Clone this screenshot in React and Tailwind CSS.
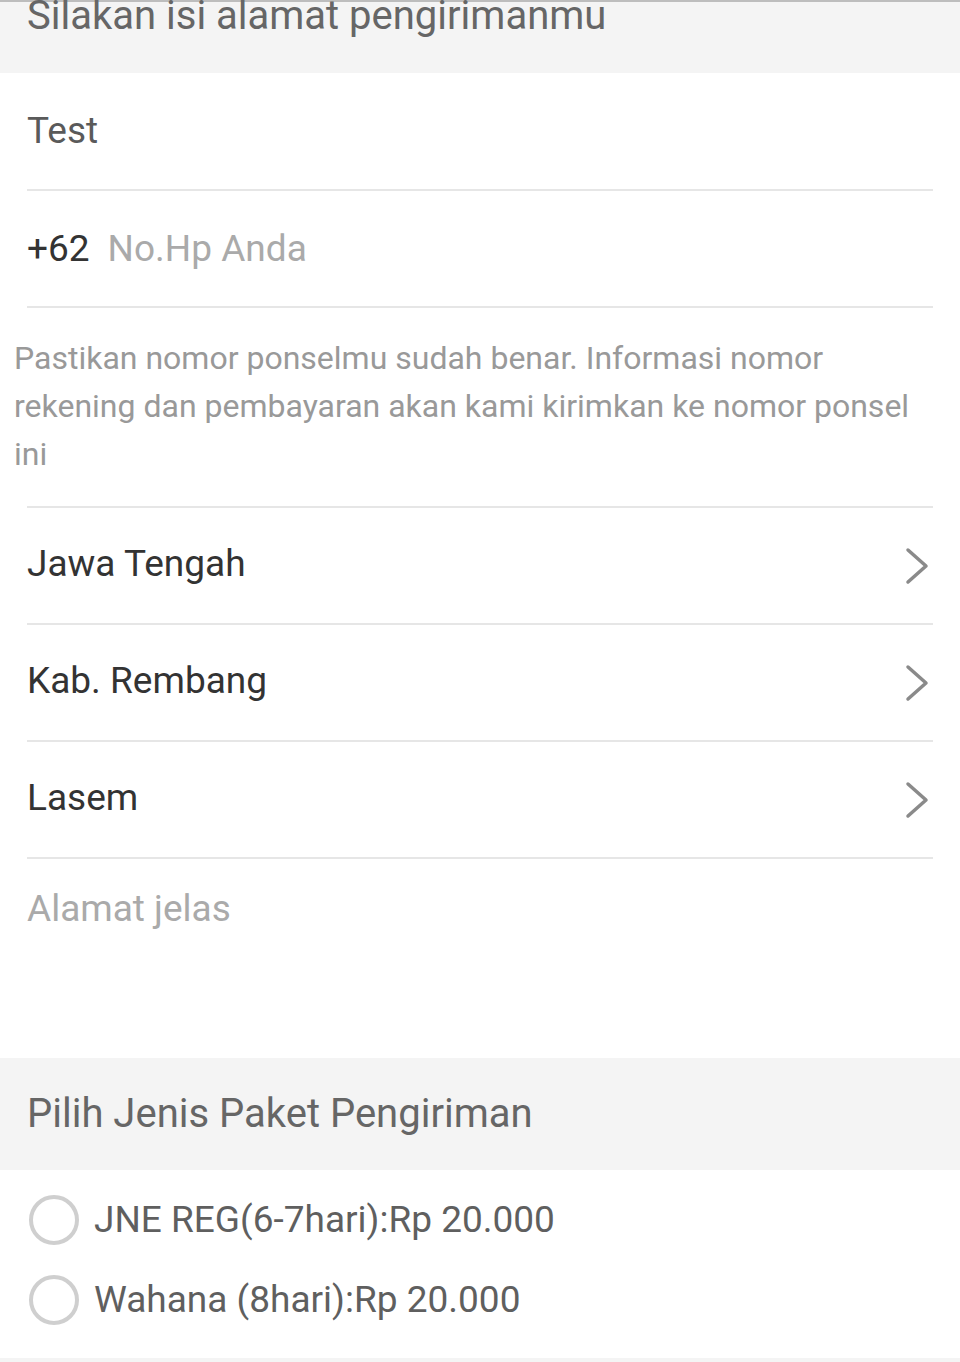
const font = { fontFamily: 'Roboto, "Noto Sans", sans-serif' }

function Chevron() {
  return (
    <svg width="26" height="40" viewBox="0 0 26 40" fill="none">
      <path d="M4 4 L22 20 L4 36" stroke="#8a8a8a" strokeWidth="3.5" strokeLinecap="round" strokeLinejoin="round" />
    </svg>
  )
}

function SelectRow({ label }) {
  return (
    <div className="mx-[27px] h-[117px] flex items-center justify-between border-b-2 border-[#e6e6e6]">
      <span className="text-[37px] text-[#333] -mt-[4px]">{label}</span>
      <span className="mr-[3px]"><Chevron /></span>
    </div>
  )
}

function Radio({ label }) {
  return (
    <div className="h-[80px] flex items-center">
      <span className="ml-[29px] w-[50px] h-[50px] rounded-full border-[4px] border-[#cfcfcf] shrink-0" />
      <span className="ml-[15px] text-[37px] text-[#5f5f5f]">{label}</span>
    </div>
  )
}

export default function App() {
  return (
    <div className="w-[960px] h-[1362px] bg-white overflow-hidden" style={font}>
      <div className="h-[73px] bg-[#f4f4f4] border-t-2 border-[#bdbdbd] px-[27px]">
        <p className="text-[40px] leading-[40px] text-[#666] -mt-[6px]">Silakan isi alamat pengirimanmu</p>
      </div>

      <div className="mx-[27px] h-[118px] flex items-center border-b-2 border-[#e6e6e6]">
        <span className="text-[37px] text-[#5a5a5a]">Test</span>
      </div>

      <div className="mx-[27px] h-[117px] flex items-center border-b-2 border-[#e6e6e6]">
        <span className="text-[37px] text-[#333]">+62</span>
        <span className="ml-[18px] text-[37px] text-[#aaa]">No.Hp Anda</span>
      </div>

      <div className="px-[14px] pt-[26px] pb-[28px]">
        <p className="text-[32px] leading-[48px] text-[#999] whitespace-nowrap">
          Pastikan nomor ponselmu sudah benar. Informasi nomor
          <br />
          rekening dan pembayaran akan kami kirimkan ke nomor ponsel
          <br />
          ini
        </p>
      </div>

      <div className="mx-[27px] border-t-2 border-[#e6e6e6]" />
      <SelectRow label="Jawa Tengah" />
      <SelectRow label="Kab. Rembang" />
      <SelectRow label="Lasem" />

      <div className="h-[199px] px-[27px] pt-[22px]">
        <span className="text-[37px] text-[#aaa]">Alamat jelas</span>
      </div>

      <div className="h-[112px] bg-[#f4f4f4] px-[27px] flex items-center">
        <span className="text-[40px] text-[#666]">Pilih Jenis Paket Pengiriman</span>
      </div>

      <div className="pt-[10px] h-[188px]">
        <Radio label="JNE REG(6-7hari):Rp 20.000" />
        <Radio label="Wahana (8hari):Rp 20.000" />
      </div>
      <div className="h-[10px] bg-[#f4f4f4]" />
    </div>
  )
}
